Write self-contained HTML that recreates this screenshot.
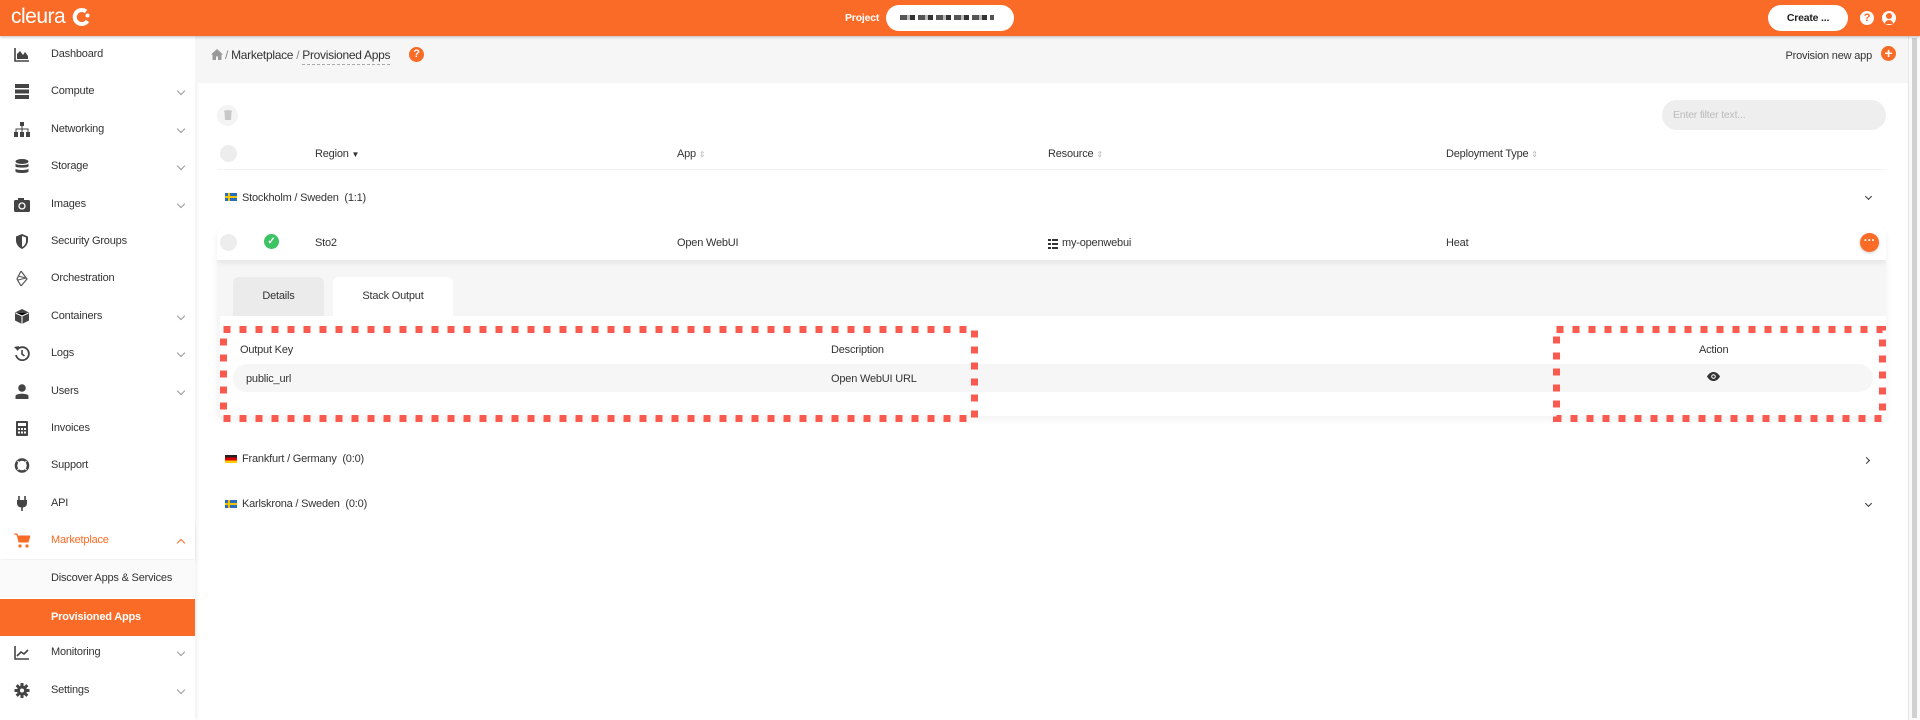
<!DOCTYPE html>
<html><head><meta charset="utf-8"><style>
*{box-sizing:border-box;margin:0;padding:0}
body{width:1920px;height:720px;overflow:hidden;font-family:"Liberation Sans",Arial,sans-serif;font-size:11px;color:#2a2a2a;background:#fff;position:relative;letter-spacing:-0.2px}
.top{position:absolute;left:0;top:0;width:1920px;height:36px;background:#f96b27;box-shadow:0 1px 3px rgba(0,0,0,.25);z-index:5}
.abs{position:absolute}
.side{position:absolute;left:0;top:36px;width:195px;height:684px;background:#fff;box-shadow:2px 0 4px rgba(0,0,0,.06)}
.si{position:absolute;left:0;width:195px;height:37px;line-height:37px;font-size:11px;color:#333}
.si .t{position:absolute;left:51px}
.si .ic{position:absolute;left:14px;top:11px;width:16px;height:15px}
.chev{position:absolute;left:178px;top:15px;width:6px;height:6px;border-right:1.3px solid #999;border-bottom:1.3px solid #999;transform:rotate(45deg)}
.bc{position:absolute;left:195px;top:36px;width:1713px;height:47px;background:#f6f6f6}
.hd{position:absolute;top:148px;font-size:11px;color:#333}
.sort{color:#bbb;font-size:8px}
.txt{position:absolute;font-size:11px;color:#333}
</style></head><body>
<div class="top">
  <div class="abs" style="left:11px;top:5px;color:#fff;font-size:21px;letter-spacing:-0.5px">cleura</div>
  <svg class="abs" style="left:72px;top:7px" width="20" height="20" viewBox="0 0 20 20"><path d="M14 4.5A7 7 0 1 0 15.5 14" fill="none" stroke="#fff" stroke-width="4"/><circle cx="15.5" cy="8.5" r="2" fill="#fff"/></svg>
  <div class="abs" style="left:845px;top:12px;color:#fff;font-size:10.5px;font-weight:bold">Project</div>
  <div class="abs" style="left:886px;top:5px;width:128px;height:26px;background:#fff;border-radius:13px"></div>
  <div class="abs" style="left:900px;top:15px;width:94px;height:5px;background:repeating-linear-gradient(90deg,#555 0 7px,#bbb 7px 10px,#333 10px 15px,#fff 15px 18px)"></div>
  <div class="abs" style="left:1768px;top:5px;width:80px;height:26px;background:#fff;border-radius:13px;font-size:10.5px;font-weight:bold;text-align:center;line-height:26px;color:#222">Create ...</div>
  <div class="abs" style="left:1860px;top:11px;width:14px;height:14px;border-radius:7px;background:#fff;color:#f96b27;font-size:11px;font-weight:bold;text-align:center;line-height:14px">?</div>
  <div class="abs" style="left:1882px;top:11px;width:14px;height:14px;border-radius:7px;background:#fff"><div class="abs" style="left:4px;top:2px;width:6px;height:6px;border-radius:3px;background:#f96b27"></div><div class="abs" style="left:3px;top:9px;width:8px;height:4px;border-radius:4px 4px 0 0;background:#f96b27"></div></div>
</div>
<div class="abs" style="left:1908px;top:36px;width:12px;height:684px;background:#fafafa;border-left:1px solid #e5e5e5"><div style="margin:2px 3px;width:5px;height:680px;background:#d0d0d0"></div></div>

<div class="side">
 <div class="si" style="top:0"><svg class="ic" viewBox="0 0 16 15"><path d="M1 1v13h14" stroke="#444" stroke-width="1.6" fill="none"/><path d="M3 12V7l3-3 3 4 2-3 3 4v3z" fill="#444"/></svg><span class="t">Dashboard</span></div>
 <div class="si" style="top:37.4px"><svg class="ic" viewBox="0 0 16 15"><rect x="1" y="0" width="14" height="4" fill="#444"/><rect x="1" y="5.5" width="14" height="4" fill="#444"/><rect x="1" y="11" width="14" height="4" fill="#444"/></svg><span class="t">Compute</span><i class="chev"></i></div>
 <div class="si" style="top:74.8px"><svg class="ic" viewBox="0 0 16 15"><rect x="6" y="0" width="4" height="4" fill="#444"/><path d="M8 4v3M2 10V7h12v3M8 7v3" stroke="#444" fill="none"/><rect x="0" y="10" width="4" height="5" fill="#444"/><rect x="6" y="10" width="4" height="5" fill="#444"/><rect x="12" y="10" width="4" height="5" fill="#444"/></svg><span class="t">Networking</span><i class="chev"></i></div>
 <div class="si" style="top:112.2px"><svg class="ic" viewBox="0 0 16 15"><ellipse cx="8" cy="2.5" rx="6.5" ry="2.5" fill="#444"/><path d="M1.5 4.5v3c0 1.5 13 1.5 13 0v-3c0 2-13 2-13 0zM1.5 9.5v3c0 2 13 2 13 0v-3c0 2-13 2-13 0z" fill="#444"/></svg><span class="t">Storage</span><i class="chev"></i></div>
 <div class="si" style="top:149.6px"><svg class="ic" viewBox="0 0 16 15"><rect x="0" y="3" width="16" height="12" rx="1.5" fill="#444"/><rect x="4" y="1" width="6" height="3" fill="#444"/><circle cx="8" cy="9" r="3" fill="none" stroke="#fff" stroke-width="1.3"/></svg><span class="t">Images</span><i class="chev"></i></div>
 <div class="si" style="top:187px"><svg class="ic" viewBox="0 0 16 15"><path d="M8 0L2 2.5v4c0 4 3 7 6 8.5 3-1.5 6-4.5 6-8.5v-4z" fill="#444"/><path d="M8 2v11c2-1 4-3 4-6V3.5z" fill="#fff"/></svg><span class="t">Security Groups</span></div>
 <div class="si" style="top:224.4px"><svg class="ic" viewBox="0 0 16 15"><path d="M7 0l6 8-6 7-4-7z" fill="none" stroke="#555" stroke-width="1.2"/><path d="M4 5l8 2M4 9l8-2" stroke="#555"/></svg><span class="t">Orchestration</span></div>
 <div class="si" style="top:261.8px"><svg class="ic" viewBox="0 0 16 15"><path d="M8 0l7 3.5v8L8 15 1 11.5v-8z" fill="#444"/><path d="M8 7v8M1.5 4L8 7l6.5-3" stroke="#fff" stroke-width="1"/></svg><span class="t">Containers</span><i class="chev"></i></div>
 <div class="si" style="top:299.2px"><svg class="ic" viewBox="0 0 16 15"><path d="M3 4A6.5 6.5 0 1 1 2 9" fill="none" stroke="#444" stroke-width="1.8"/><path d="M0 1l4 4 1-5z" fill="#444"/><path d="M8 4v4l2.5 2" stroke="#444" stroke-width="1.6" fill="none"/></svg><span class="t">Logs</span><i class="chev"></i></div>
 <div class="si" style="top:336.6px"><svg class="ic" viewBox="0 0 16 15"><circle cx="8" cy="4" r="3.8" fill="#444"/><path d="M1.5 15v-3c0-3 13-3 13 0v3z" fill="#444"/></svg><span class="t">Users</span><i class="chev"></i></div>
 <div class="si" style="top:374px"><svg class="ic" viewBox="0 0 16 15"><rect x="2" y="0" width="12" height="15" rx="1" fill="#444"/><rect x="4" y="2" width="8" height="3" fill="#fff"/><path d="M4 7h2v2H4zM7 7h2v2H7zM10 7h2v2h-2zM4 10.5h2v2H4zM7 10.5h2v2H7zM10 10.5h2v2h-2z" fill="#fff"/></svg><span class="t">Invoices</span></div>
 <div class="si" style="top:411.4px"><svg class="ic" viewBox="0 0 16 15"><circle cx="8" cy="7.5" r="6" fill="none" stroke="#444" stroke-width="2.6"/><path d="M3.5 3l2.5 2.5M12.5 3L10 5.5M3.5 12L6 9.5M12.5 12L10 9.5" stroke="#fff" stroke-width="1.2"/></svg><span class="t">Support</span></div>
 <div class="si" style="top:448.8px"><svg class="ic" viewBox="0 0 16 15"><path d="M5 0v4M11 0v4" stroke="#444" stroke-width="1.6"/><path d="M3 4h10v3c0 3-2 4.5-5 4.5S3 10 3 7z" fill="#444"/><path d="M8 11v4" stroke="#444" stroke-width="1.6"/></svg><span class="t">API</span></div>
 <div class="si" style="top:486.2px;color:#f96b27;box-shadow:0 3px 4px rgba(0,0,0,.06)"><svg class="ic" viewBox="0 0 16 15"><path d="M0 1h3l2 8h9l2-6H4" fill="#f96b27" stroke="#f96b27" stroke-width="1"/><path d="M4 3h12l-2 6H5z" fill="#f96b27"/><circle cx="6" cy="13" r="1.6" fill="#f96b27"/><circle cx="13" cy="13" r="1.6" fill="#f96b27"/></svg><span class="t">Marketplace</span><i class="chev" style="top:18px;border-color:#f96b27;transform:rotate(-135deg)"></i></div>
 <div class="si" style="top:523.6px;background:#fafafa"><span class="t">Discover Apps &amp; Services</span></div>
 <div class="si" style="top:563px;height:37px;background:#f96b27;color:#fff;font-weight:bold"><span class="t">Provisioned Apps</span></div>
 <div class="si" style="top:598.4px"><svg class="ic" viewBox="0 0 16 15"><path d="M1 1v13h14" stroke="#444" stroke-width="1.6" fill="none"/><path d="M3 11l4-4 3 2 4-4" stroke="#444" stroke-width="1.6" fill="none"/></svg><span class="t">Monitoring</span><i class="chev"></i></div>
 <div class="si" style="top:635.8px"><svg class="ic" viewBox="0 0 16 15"><circle cx="8" cy="7.5" r="5" fill="#444"/><path d="M8 0v15M0.5 7.5h15M2.7 2.2l10.6 10.6M13.3 2.2L2.7 12.8" stroke="#444" stroke-width="3"/><circle cx="8" cy="7.5" r="2" fill="#fff"/></svg><span class="t">Settings</span><i class="chev"></i></div>
</div>

<div class="bc">
  <svg class="abs" style="left:16px;top:13px" width="12" height="11" viewBox="0 0 12 11"><path d="M6 0L0 5.5h1.5V11h3.5V7.5h2V11h3.5V5.5H12z" fill="#999"/></svg>
  <div class="abs" style="left:30px;top:12px;font-size:12px;color:#333;letter-spacing:-0.3px"><span style="color:#888">/</span> Marketplace <span style="color:#888">/</span> <span style="border-bottom:1px dashed #aaa;padding-bottom:2px">Provisioned Apps</span></div>
  <div class="abs" style="left:214px;top:11px;width:15px;height:15px;border-radius:8px;background:#f96b27;color:#fff;font-weight:bold;font-size:11px;text-align:center;line-height:15px">?</div>
  <div class="abs" style="right:36px;top:14px;font-size:11px;color:#333">Provision new app</div>
  <div class="abs" style="left:1686px;top:10px;width:15px;height:15px;border-radius:8px;background:#f96b27;color:#fff;font-weight:bold;font-size:14px;text-align:center;line-height:15px">+</div>
</div>

<div class="abs" style="left:217px;top:105px;width:21px;height:21px;border-radius:11px;background:#f4f4f4"></div>
<svg class="abs" style="left:224px;top:110px" width="8" height="10" viewBox="0 0 8 10"><path d="M0 1h8M3 0h2M1 2h6l-.5 8h-5z" stroke="#c8c8c8" fill="#c8c8c8"/></svg>
<div class="abs" style="left:1662px;top:100px;width:224px;height:30px;border-radius:15px;background:#eeeeee;color:#bbb;font-size:10.5px;line-height:30px;padding-left:11px">Enter filter text...</div>

<div class="abs" style="left:220px;top:145px;width:17px;height:17px;border-radius:9px;background:#ededed"></div>
<div class="hd" style="left:315px">Region <span style="font-size:8px;color:#333">▼</span></div>
<div class="hd" style="left:677px">App <span class="sort">⇕</span></div>
<div class="hd" style="left:1048px">Resource <span class="sort">⇕</span></div>
<div class="hd" style="left:1446px">Deployment Type <span class="sort">⇕</span></div>
<div class="abs" style="left:217px;top:169px;width:1669px;height:1px;background:#f2f2f2"></div>

<div class="abs" style="left:225px;top:193px;width:12px;height:8px;background:#2a6ebb"><div class="abs" style="left:3px;top:0;width:2px;height:8px;background:#f5c400"></div><div class="abs" style="left:0;top:3px;width:12px;height:2px;background:#f5c400"></div></div>
<div class="txt" style="left:242px;top:192px">Stockholm / Sweden &nbsp;(1:1)</div>
<div class="abs" style="left:1866px;top:194px;width:5px;height:5px;border-right:1.5px solid #333;border-bottom:1.5px solid #333;transform:rotate(45deg)"></div>

<div class="abs" style="left:217px;top:260px;width:1669px;height:157px;background:#f6f6f6;box-shadow:0 2px 8px rgba(0,0,0,.06)"></div>
<div class="abs" style="left:217px;top:224px;width:1669px;height:36px;background:#fff;border-radius:12px 12px 0 0;box-shadow:0 3px 6px rgba(0,0,0,.07)"></div>
<div class="abs" style="left:220px;top:234px;width:17px;height:17px;border-radius:9px;background:#ededed"></div>
<div class="abs" style="left:264px;top:234px;width:15px;height:15px;border-radius:8px;background:#3cc463;color:#fff;font-size:10px;font-weight:bold;text-align:center;line-height:15px">✓</div>
<div class="txt" style="left:315px;top:237px">Sto2</div>
<div class="txt" style="left:677px;top:237px">Open WebUI</div>
<svg class="abs" style="left:1048px;top:239px" width="10" height="10" viewBox="0 0 10 10"><path d="M0 0h3v2H0zM4 0h6v2H4zM0 4h3v2H0zM4 4h6v2H4zM0 8h3v2H0zM4 8h6v2H4z" fill="#333"/></svg>
<div class="txt" style="left:1062px;top:237px">my-openwebui</div>
<div class="txt" style="left:1446px;top:237px">Heat</div>
<div class="abs" style="left:1860px;top:233px;width:19px;height:19px;border-radius:10px;background:#f96b27;color:#fff;font-size:12px;font-weight:bold;text-align:center;line-height:14px;box-shadow:0 1px 3px rgba(0,0,0,.2)">···</div>

<div class="abs" style="left:233px;top:277px;width:91px;height:40px;background:#ebebeb;border-radius:6px 6px 0 0;text-align:center;line-height:38px;font-size:11px;color:#333">Details</div>
<div class="abs" style="left:333px;top:277px;width:120px;height:40px;background:#fff;border-radius:6px 6px 0 0;text-align:center;line-height:38px;font-size:11px;color:#333">Stack Output</div>
<div class="abs" style="left:220px;top:316px;width:1666px;height:100px;background:#fff"></div>
<div class="txt" style="left:240px;top:344px">Output Key</div>
<div class="txt" style="left:831px;top:344px">Description</div>
<div class="txt" style="left:1699px;top:344px">Action</div>
<div class="abs" style="left:233px;top:364px;width:1640px;height:28px;background:#f6f6f6;border-radius:14px"></div>
<div class="txt" style="left:246px;top:373px">public_url</div>
<div class="txt" style="left:831px;top:373px">Open WebUI URL</div>
<svg class="abs" style="left:1707px;top:372px" width="13" height="9" viewBox="0 0 13 9"><path d="M0 4.5C2 1 4.5 0 6.5 0s4.5 1 6.5 4.5C11 8 8.5 9 6.5 9S2 8 0 4.5z" fill="#333"/><circle cx="6.5" cy="4.5" r="2.3" fill="#fff"/><circle cx="6.5" cy="4.5" r="1.3" fill="#333"/></svg>

<svg class="abs" style="left:0;top:0" width="1920" height="720">
<rect x="223.5" y="329.5" width="751" height="89" fill="none" stroke="#f85a50" stroke-width="7" stroke-dasharray="7 9"/>
<rect x="1556.5" y="329.5" width="326" height="89" fill="none" stroke="#f85a50" stroke-width="7" stroke-dasharray="7 9"/>
</svg>

<div class="abs" style="left:225px;top:455px;width:12px;height:8px;background:linear-gradient(#222 0 33%,#dd0000 33% 66%,#ffce00 66%)"></div>
<div class="txt" style="left:242px;top:453px">Frankfurt / Germany &nbsp;(0:0)</div>
<div class="abs" style="left:1864px;top:458px;width:5px;height:5px;border-right:1.5px solid #333;border-bottom:1.5px solid #333;transform:rotate(-45deg)"></div>
<div class="abs" style="left:225px;top:500px;width:12px;height:8px;background:#2a6ebb"><div class="abs" style="left:3px;top:0;width:2px;height:8px;background:#f5c400"></div><div class="abs" style="left:0;top:3px;width:12px;height:2px;background:#f5c400"></div></div>
<div class="txt" style="left:242px;top:498px">Karlskrona / Sweden &nbsp;(0:0)</div>
<div class="abs" style="left:1866px;top:501px;width:5px;height:5px;border-right:1.5px solid #333;border-bottom:1.5px solid #333;transform:rotate(45deg)"></div>
</body></html>
